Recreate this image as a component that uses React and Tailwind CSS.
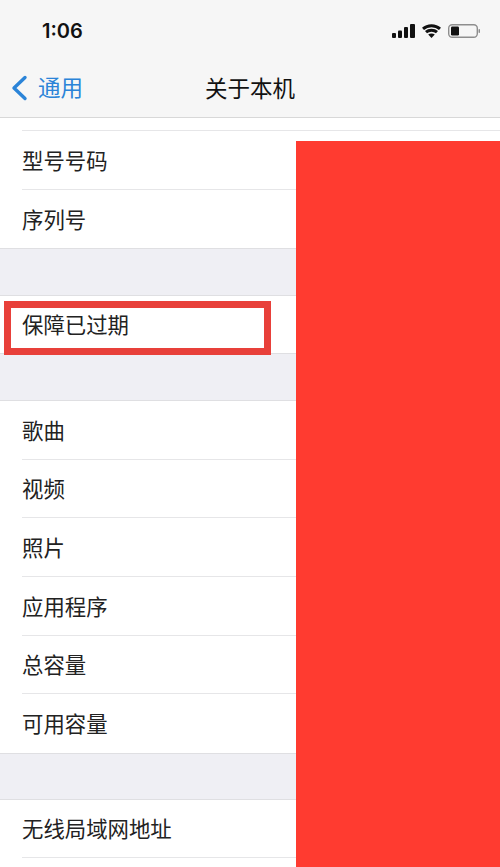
const font = { fontFamily: '"Noto Sans CJK SC", sans-serif' };

function Row({ label, divider = true, h = 'h-[58.67px]' }) {
  return (
    <div className={`pl-[22px] bg-white ${h}`}>
      <div className={`h-full flex items-center text-[21.4px] leading-none text-[#222] ${divider ? 'border-b border-[#e6e6e8]' : ''}`}>
        <span className="-mt-[1px]">{label}</span>
      </div>
    </div>
  );
}

function Gap({ h = 'h-[48px]' }) {
  return <div className={`${h} bg-[#efeff4] border-y border-[#dfdfe2]`} />;
}

export default function App() {
  return (
    <div className="relative w-[500px] h-[867px] overflow-hidden bg-white" style={font}>
      <header className="h-[118px] bg-[#f6f6f6] border-b border-[#d8d8d8] flex flex-col">
        <div className="h-[62px] flex items-center justify-between pl-[42px] pr-[20px]">
          <span className="text-[20px] font-semibold text-[#111]" style={{ fontFamily: 'Inter, sans-serif' }}>1:06</span>
          <div className="flex items-center gap-[7px]">
            <svg width="23" height="14" viewBox="0 0 23 14" fill="#111">
              <rect x="0" y="9" width="4" height="5" rx="1" />
              <rect x="6" y="6.5" width="4" height="7.5" rx="1" />
              <rect x="12" y="3" width="4" height="11" rx="1" />
              <rect x="18" y="0" width="5" height="14" rx="1" />
            </svg>
            <svg width="19" height="14" viewBox="0 0 19 14" fill="none" stroke="#111" strokeWidth="3">
              <path d="M1 4.8C5.6 0.6 13.4 0.6 18 4.8" />
              <path d="M4 8.2C6.9 5.6 12.1 5.6 15 8.2" />
              <path d="M9.5 14L6.2 10.6C8 9.1 11 9.1 12.8 10.6Z" fill="#111" stroke="none" />
            </svg>
            <svg width="32" height="14" viewBox="0 0 32 14" fill="none">
              <rect x="0.7" y="0.7" width="28.6" height="12.6" rx="3.5" stroke="#8e8e8e" strokeWidth="1.4" />
              <rect x="3" y="2.5" width="8" height="9" rx="1.2" fill="#111" />
              <rect x="30.5" y="5" width="1.5" height="4" rx="0.75" fill="#8e8e8e" />
            </svg>
          </div>
        </div>
        <div className="relative h-[55px] flex items-center justify-center">
          <div className="absolute left-[11px] top-[13px] flex items-center gap-[10px] text-[#2b84d8]">
            <svg width="17" height="26" viewBox="0 0 17 26" fill="none" stroke="currentColor" strokeWidth="3.4" strokeLinecap="round" strokeLinejoin="round">
              <path d="M14 2.5L3 13L14 23.5" />
            </svg>
            <span className="text-[22.5px] leading-none -mt-[3px]">通用</span>
          </div>
          <span className="text-[22.5px] leading-none text-[#111] -mt-[5px]">关于本机</span>
        </div>
      </header>

      <main className="flex flex-col">
        <div className="h-[13px] bg-white pl-[22px]">
          <div className="h-full border-b border-[#e6e6e8]" />
        </div>
        <Row label="型号号码" h="h-[59px]" />
        <Row label="序列号" divider={false} h="h-[58px]" />
        <Gap />
        <Row label="保障已过期" divider={false} h="h-[57px]" />
        <Gap />
        <Row label="歌曲" />
        <Row label="视频" />
        <Row label="照片" />
        <Row label="应用程序" />
        <Row label="总容量" />
        <Row label="可用容量" divider={false} />
        <Gap h="h-[47px]" />
        <Row label="无线局域网地址" h="h-[58px]" />
      </main>

      <div className="absolute left-[296px] top-[141px] right-0 bottom-0 bg-[#ff3b30]" />
      <div className="absolute left-[4px] top-[301px] w-[267px] h-[53.5px] border-[7.5px] border-[#e8403a]" />
    </div>
  );
}
